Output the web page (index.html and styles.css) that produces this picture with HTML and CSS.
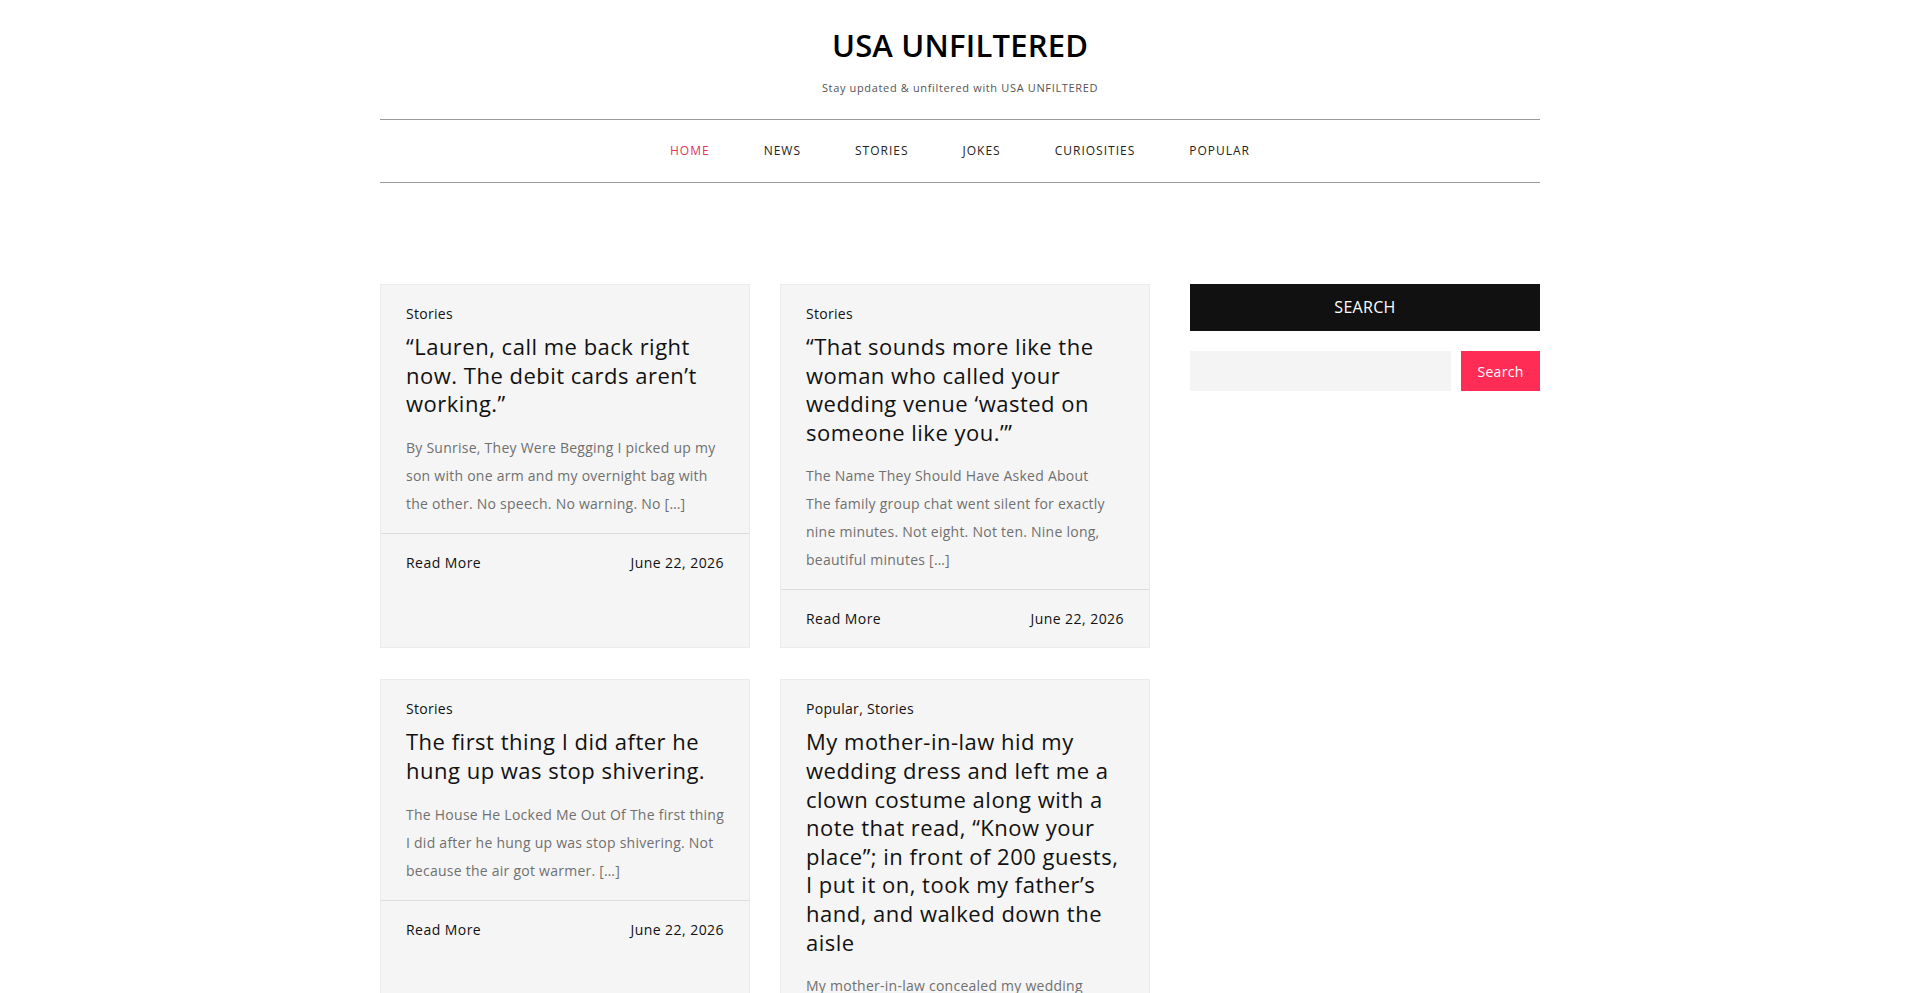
FILE: index.html
```html
<!DOCTYPE html>
<html lang="en">
<head>
<meta charset="utf-8">
<title>USA UNFILTERED</title>
<link rel="stylesheet" href="styles.css">
</head>
<body>
<div class="page">
  <header class="site-header">
    <div class="branding">
      <h1 class="site-title">USA UNFILTERED</h1>
      <p class="tagline">Stay updated &amp; unfiltered with USA UNFILTERED</p>
    </div>
    <nav class="main-nav">
      <ul class="menu">
        <li class="menu-item active">HOME</li>
        <li class="menu-item">NEWS</li>
        <li class="menu-item">STORIES</li>
        <li class="menu-item">JOKES</li>
        <li class="menu-item">CURIOSITIES</li>
        <li class="menu-item">POPULAR</li>
      </ul>
    </nav>
  </header>

  <main class="content">
    <div class="posts">
      <article class="card">
        <div class="card-body">
          <div class="cats">Stories</div>
          <h2 class="card-title">“Lauren, call me back right now. The debit cards aren’t working.”</h2>
          <p class="excerpt">By Sunrise, They Were Begging I picked up my son with one arm and my overnight bag with the other. No speech. No warning. No […]</p>
        </div>
        <div class="card-foot"><span>Read More</span><span>June 22, 2026</span></div>
      </article>
      <article class="card">
        <div class="card-body">
          <div class="cats">Stories</div>
          <h2 class="card-title">“That sounds more like the woman who called your wedding venue ‘wasted on someone like you.’”</h2>
          <p class="excerpt">The Name They Should Have Asked About<br>The family group chat went silent for exactly nine minutes. Not eight. Not ten. Nine long, beautiful minutes […]</p>
        </div>
        <div class="card-foot"><span>Read More</span><span>June 22, 2026</span></div>
      </article>
      <article class="card">
        <div class="card-body">
          <div class="cats">Stories</div>
          <h2 class="card-title">The first thing I did after he hung up was stop shivering.</h2>
          <p class="excerpt">The House He Locked Me Out Of The first thing I did after he hung up was stop shivering. Not because the air got warmer. […]</p>
        </div>
        <div class="card-foot"><span>Read More</span><span>June 22, 2026</span></div>
      </article>
      <article class="card">
        <div class="card-body">
          <div class="cats">Popular, Stories</div>
          <h2 class="card-title">My mother-in-law hid my wedding dress and left me a clown costume along with a note that read, “Know your place”; in front of 200 guests, I put it on, took my father’s hand, and walked down the aisle</h2>
          <p class="excerpt">My mother-in-law concealed my wedding ensemble and replaced it with a clown costume […]</p>
        </div>
        <div class="card-foot"><span>Read More</span><span>June 22, 2026</span></div>
      </article>
    </div>

    <aside class="sidebar">
      <section class="widget">
        <h3 class="widget-title">SEARCH</h3>
        <form class="search-form">
          <input class="search-input" type="text" aria-label="Search">
          <button class="search-btn" type="button">Search</button>
        </form>
      </section>
    </aside>
  </main>
</div>
</body>
</html>
```

FILE: styles.css
```css
* { box-sizing: border-box; }

body {
  margin: 0;
  background: #fff;
  color: #111;
  font-family: "Open Sans", "Liberation Sans", sans-serif;
}

.page {
  width: 1160px;
  margin: 0 auto;
}

.branding {
  text-align: center;
  padding-top: 25px;
}

.site-title {
  margin: 0;
  font-size: 31px;
  line-height: 40px;
  font-weight: 600;
  color: #000;
  letter-spacing: 0.2px;
}

.tagline {
  margin: 15px 0 0;
  font-size: 11px;
  line-height: 16px;
  color: #555;
  letter-spacing: 0.65px;
}

.main-nav {
  margin-top: 23px;
  border-top: 1px solid #9a9a9a;
  border-bottom: 1px solid #9a9a9a;
}

.menu {
  list-style: none;
  margin: 0;
  padding: 22px 0;
  display: flex;
  justify-content: center;
  gap: 54px;
}

.menu-item {
  font-size: 12px;
  line-height: 18px;
  letter-spacing: 1px;
  color: #222;
}

.menu-item.active { color: #e3345c; }

.content {
  margin-top: 101px;
  display: grid;
  grid-template-columns: 770px 350px;
  gap: 40px;
  align-items: start;
}

.posts {
  display: grid;
  grid-template-columns: 1fr 1fr;
  column-gap: 30px;
  row-gap: 31px;
}

.card {
  background: #f5f5f5;
  border: 1px solid #ebebeb;
}

.card-body {
  padding: 18px 25px 15px;
}

.cats {
  font-size: 14px;
  line-height: 21px;
  letter-spacing: 0.3px;
  color: #111;
}

.card-title {
  margin: 8px 0 0;
  font-size: 22px;
  line-height: 28.6px;
  font-weight: 400;
  letter-spacing: 0.5px;
  color: #111;
}

.excerpt {
  margin: 16px 0 0;
  font-size: 14px;
  line-height: 28px;
  letter-spacing: 0.25px;
  color: #707070;
}

.card-foot {
  border-top: 1px solid #dcdcdc;
  padding: 18px 25px;
  display: flex;
  justify-content: space-between;
  font-size: 14px;
  line-height: 21px;
  letter-spacing: 0.45px;
  color: #111;
}

.widget-title {
  margin: 0;
  background: #111;
  color: #fff;
  text-align: center;
  font-size: 16px;
  line-height: 21px;
  font-weight: 400;
  letter-spacing: 0.3px;
  padding: 13px 0;
}

.search-form {
  margin-top: 20px;
  display: flex;
  gap: 10px;
}

.search-input {
  flex: 1;
  height: 40px;
  border: none;
  background: #f4f4f4;
  margin: 0;
}

.search-btn {
  width: 79px;
  height: 40px;
  border: none;
  background: #ff2d56;
  color: #fff;
  font-family: inherit;
  font-size: 14px;
  letter-spacing: 0.3px;
  margin: 0;
  padding: 0;
}
```
